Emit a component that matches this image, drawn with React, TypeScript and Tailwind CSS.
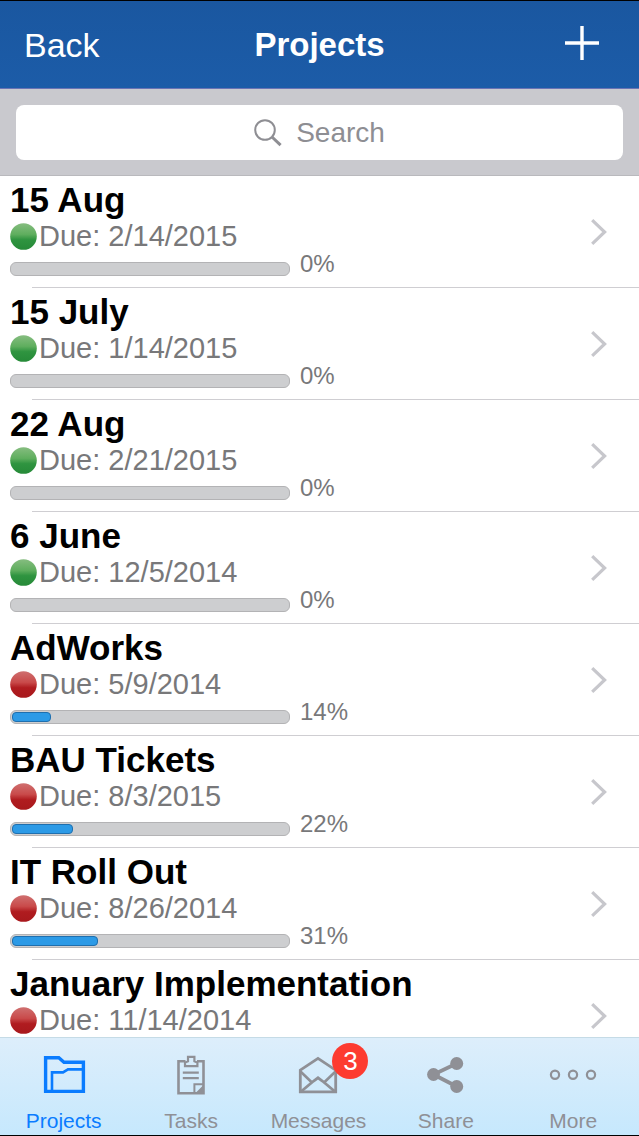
import type { ReactNode } from 'react';

type Project = {
  name: string;
  due: string;
  progress?: number;
  status: 'green' | 'red';
};

const projects: Project[] = [
  { name: '15 Aug', due: '2/14/2015', progress: 0, status: 'green' },
  { name: '15 July', due: '1/14/2015', progress: 0, status: 'green' },
  { name: '22 Aug', due: '2/21/2015', progress: 0, status: 'green' },
  { name: '6 June', due: '12/5/2014', progress: 0, status: 'green' },
  { name: 'AdWorks', due: '5/9/2014', progress: 14, status: 'red' },
  { name: 'BAU Tickets', due: '8/3/2015', progress: 22, status: 'red' },
  { name: 'IT Roll Out', due: '8/26/2014', progress: 31, status: 'red' },
  { name: 'January Implementation', due: '11/14/2014', status: 'red' },
];

const statusColors = {
  green: { top: '#86bd80', mid: '#5fae5e', low: '#2f9440', bottom: '#268a38' },
  red: { top: '#cf7070', mid: '#c94a4a', low: '#b01c20', bottom: '#a8181c' },
};

function StatusDot({ status }: { status: Project['status'] }) {
  const colors = statusColors[status];
  const id = `dot-${status}`;
  return (
    <svg className="size-[27px] shrink-0" viewBox="0 0 27 27" aria-hidden="true">
      <defs>
        <linearGradient id={id} x1="0" y1="0" x2="0" y2="1">
          <stop offset="0" stopColor={colors.top} />
          <stop offset="0.42" stopColor={colors.mid} />
          <stop offset="0.62" stopColor={colors.low} />
          <stop offset="1" stopColor={colors.bottom} />
        </linearGradient>
      </defs>
      <circle cx="13.5" cy="13.5" r="13.3" fill={`url(#${id})`} />
    </svg>
  );
}

function ProgressBar({ name, value }: { name: string; value: number }) {
  return (
    <div className="flex h-6 items-end gap-[10px]">
      <div
        role="progressbar"
        aria-label={`${name} progress`}
        aria-valuenow={value}
        className="h-[14px] w-[280px] rounded-[6px] border border-[#b3b3b5] bg-[#cdced0] p-px"
      >
        {value > 0 && (
          <div
            className="h-full rounded-[4px] border border-[#1f6fae] bg-[#2c9ae6]"
            style={{ width: `${value}%` }}
          />
        )}
      </div>
      <span className="text-2xl leading-6 text-[#78787a]">{value}%</span>
    </div>
  );
}

function ProjectRow({ project }: { project: Project }) {
  return (
    <li className="relative h-28 after:absolute after:right-0 after:bottom-0 after:left-8 after:h-px after:bg-[#cfced2]">
      <a href="#project" className="flex h-full items-center justify-between pr-8 pl-[10px]">
        <div className="h-full min-w-0 pt-1">
          <h2 className="truncate text-[35px] leading-10 font-bold text-black">{project.name}</h2>
          <div className="flex items-center gap-0.5 text-[29px] leading-8 text-[#78787a]">
            <StatusDot status={project.status} />
            <span>Due: {project.due}</span>
          </div>
          {project.progress !== undefined && <ProgressBar name={project.name} value={project.progress} />}
        </div>
        <svg className="h-[26px] w-4 shrink-0" viewBox="0 0 16 26" fill="none" stroke="#c7c7cc" strokeWidth="3.2" aria-hidden="true">
          <path d="M1.2 1.2 13.6 13 1.2 24.8" />
        </svg>
      </a>
    </li>
  );
}

function TabIcon({ children }: { children: ReactNode }) {
  return (
    <svg className="h-10 w-12" viewBox="0 0 48 40" fill="none" stroke="currentColor" aria-hidden="true">
      {children}
    </svg>
  );
}

const tabs = [
  {
    label: 'Projects',
    icon: (
      <TabIcon>
        <path d="M5.6 2.8h13.2l5.2 4.4h19.4v29.2H5.6z" strokeWidth="3.4" />
        <path d="M12 36V17.4h11l5-3h15" strokeWidth="2.6" />
      </TabIcon>
    ),
  },
  {
    label: 'Tasks',
    icon: (
      <TabIcon>
        <path d="M18.5 6.2h-7v32h25v-32h-6.5" strokeWidth="2.6" />
        <path d="M18 11.2V7.6l3-1.4V1.8h6.4v4.4l3 1.4v3.6z" strokeWidth="2.2" />
        <path d="M15.8 17.6h16M15.8 23.2h16" strokeWidth="2.2" />
        <path d="M27.4 38v-8.8h9" strokeWidth="2" />
        <path d="M28 38.5l9-9v9z" fill="currentColor" stroke="none" />
      </TabIcon>
    ),
  },
  {
    label: 'Messages',
    badge: 3,
    icon: (
      <TabIcon>
        <path d="M6.3 15.2 24 3.4l17.7 11.8v21.6H6.3z" strokeWidth="2.8" />
        <path d="M6.5 16.5 17.4 27M41.5 16.5 30.6 27" strokeWidth="2.6" />
        <path d="M6.8 36.8 19.6 26 24 22.8l4.4 3.2 12.8 10.8" strokeWidth="2.8" />
      </TabIcon>
    ),
  },
  {
    label: 'Share',
    icon: (
      <TabIcon>
        <path d="M34.7 8.5 11.5 19.5l23.2 12" strokeWidth="3.8" />
        <g fill="currentColor" stroke="none">
          <circle cx="11.5" cy="19.5" r="6.4" />
          <circle cx="34.7" cy="8.5" r="6.5" />
          <circle cx="34.7" cy="31.5" r="6.5" />
        </g>
      </TabIcon>
    ),
  },
  {
    label: 'More',
    icon: (
      <TabIcon>
        <g strokeWidth="2.2">
          <circle cx="6" cy="19.7" r="4.1" />
          <circle cx="24" cy="19.7" r="4.1" />
          <circle cx="42" cy="19.7" r="4.1" />
        </g>
      </TabIcon>
    ),
  },
];

export default function App() {
  return (
    <div className="flex h-screen flex-col bg-white font-['Liberation_Sans',Arial,sans-serif]">
      <header className="grid h-[89px] shrink-0 grid-cols-3 items-center border-t border-b border-t-black border-b-[#6a74b4] bg-linear-to-b from-[#1a57a0] to-[#1c5ca8] text-white">
        <button type="button" className="justify-self-start pl-6 text-[34px] leading-10">
          Back
        </button>
        <h1 className="text-center text-[33px] leading-10 font-bold">Projects</h1>
        <button type="button" aria-label="Add project" className="justify-self-end pr-10 pb-1">
          <svg className="size-[34px]" viewBox="0 0 34 34" stroke="currentColor" strokeWidth="3.4" aria-hidden="true">
            <path d="M17 0v34M0 17h34" />
          </svg>
        </button>
      </header>

      <div className="shrink-0 border-b border-[#b9b9bd] bg-[#c9c9ce] px-4 pt-4 pb-[15px]">
        <label className="flex h-[55px] items-center justify-center gap-3.5 rounded-lg bg-white">
          <svg className="size-7 shrink-0" viewBox="0 0 28 28" fill="none" stroke="#8e8e93" aria-hidden="true">
            <circle cx="11" cy="11" r="9.8" strokeWidth="2" />
            <path d="M18 18l8.6 8.2" strokeWidth="3" />
          </svg>
          <input
            type="search"
            aria-label="Search"
            placeholder="Search"
            className="field-sizing-content bg-transparent text-[28px] leading-8 outline-none placeholder:text-[#8e8e93]"
          />
        </label>
      </div>

      <ul className="min-h-0 flex-1 overflow-hidden">
        {projects.map((project) => (
          <ProjectRow key={project.name} project={project} />
        ))}
      </ul>

      <nav className="grid shrink-0 grid-cols-5 border-t border-b border-t-[#c5dbe6] border-b-black bg-linear-to-b from-[#ddeefb] to-[#c6e8fd] pt-[17px] pr-0.5 pb-0.5">
        {tabs.map((tab) => (
          <a
            key={tab.label}
            href={`#${tab.label.toLowerCase()}`}
            className={`flex flex-col items-center gap-3.5 ${tab.label === 'Projects' ? 'text-[#0a7cff]' : 'text-[#8f9096]'}`}
          >
            <span className="relative">
              {tab.icon}
              {tab.badge && (
                <span className="absolute -top-3 -right-[26px] flex size-9 items-center justify-center rounded-full bg-[#fd3b30] text-[26px] leading-9 text-white">
                  {tab.badge}
                </span>
              )}
            </span>
            <span className="text-[21px] leading-6">{tab.label}</span>
          </a>
        ))}
      </nav>
    </div>
  );
}
